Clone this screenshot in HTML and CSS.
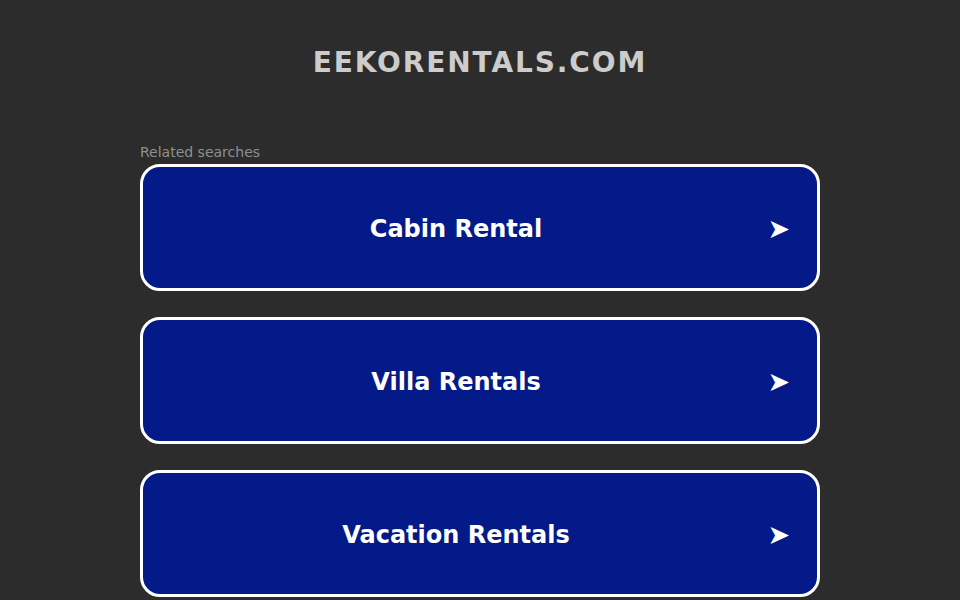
FILE: index.html
```html
<!DOCTYPE html>
<html lang="en">
<head>
    <meta charset="UTF-8">
    <meta name="viewport" content="width=device-width, initial-scale=1.0">
    <title>eekorentals.com</title>
    <link rel="stylesheet" href="styles.css">
</head>
<body>
    <header class="site-header">
        <h1 class="domain">EEKORENTALS.COM</h1>
    </header>

    <main class="container">
        <p class="related-label">Related searches</p>
        <ul class="search-list">
            <li><a class="search-link" href="#"><span class="search-text">Cabin Rental</span><span class="search-arrow">&#10148;</span></a></li>
            <li><a class="search-link" href="#"><span class="search-text">Villa Rentals</span><span class="search-arrow">&#10148;</span></a></li>
            <li><a class="search-link" href="#"><span class="search-text">Vacation Rentals</span><span class="search-arrow">&#10148;</span></a></li>
        </ul>
    </main>
</body>
</html>
```

FILE: styles.css
```css
* {
    margin: 0;
    padding: 0;
    box-sizing: border-box;
}

body {
    font-family: "DejaVu Sans", Verdana, sans-serif;
    background-color: #2c2c2c;
    color: white;
}

.site-header {
    padding-top: 45px;
    text-align: center;
}

.domain {
    font-size: 28px;
    font-weight: bold;
    letter-spacing: 1.9px;
    line-height: 36px;
    color: #cccccc;
}

.container {
    width: 680px;
    margin: 0 auto;
    padding-top: 63px;
}

.related-label {
    font-size: 14px;
    line-height: 17px;
    color: #8f8f8f;
    margin-bottom: 3px;
}

.search-list {
    list-style: none;
    display: flex;
    flex-direction: column;
    gap: 26px;
}

.search-link {
    display: flex;
    align-items: center;
    height: 127px;
    padding: 2px 27px 0;
    background-color: #031a88;
    border: 3px solid white;
    border-radius: 20px;
    color: white;
    text-decoration: none;
    font-weight: bold;
}

.search-text {
    flex: 1;
    text-align: center;
    font-size: 24px;
}

.search-arrow {
    width: 48px;
    text-align: right;
    font-size: 27px;
    line-height: 1;
}
```
